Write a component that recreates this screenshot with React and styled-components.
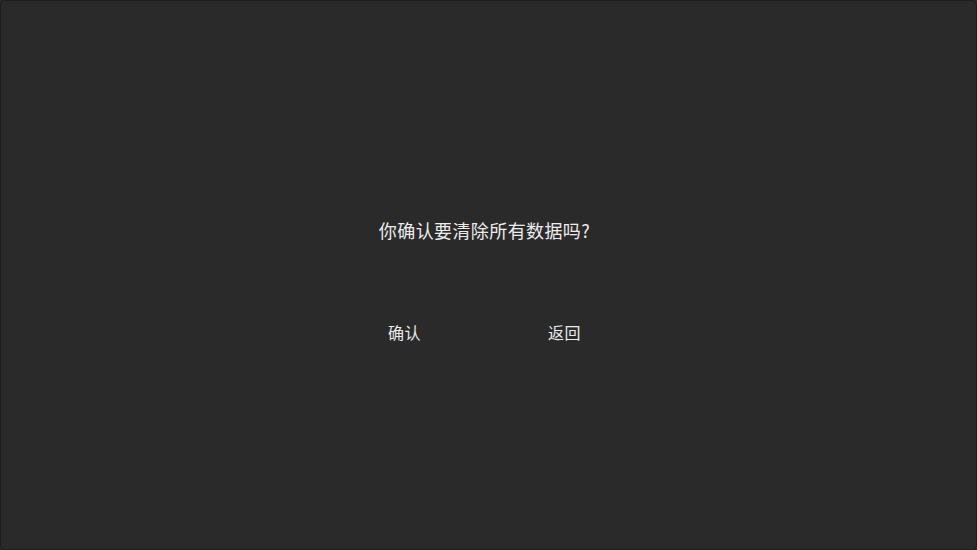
import React from 'react';
import styled, { createGlobalStyle } from 'styled-components';

const GlobalStyle = createGlobalStyle`
  html, body {
    margin: 0;
    padding: 0;
    background-color: #2a2a2a;
  }
  body {
    font-family: "Noto Sans CJK SC", "Noto Sans", sans-serif;
  }
`;

const Screen = styled.div`
  align-items: center;
  background-color: #2a2a2a;
  border: 1px solid #1d1d1d;
  border-radius: 5px;
  box-sizing: border-box;
  display: flex;
  flex-direction: column;
  height: 550px;
  justify-content: center;
  padding: 11px 8px 0 0;
  width: 977px;
`;

const Message = styled.p`
  color: #ececec;
  font-size: 18px;
  letter-spacing: 0.4px;
  line-height: 24px;
  margin: 0;
`;

const ButtonRow = styled.div`
  display: flex;
  gap: 60px;
  margin-top: 79px;
`;

const TextButton = styled.button`
  background: none;
  border: none;
  color: #ececec;
  cursor: pointer;
  font-family: inherit;
  font-size: 16px;
  letter-spacing: 0.5px;
  line-height: 22px;
  padding: 0;
  width: 100px;
`;

export default function App() {
  return (
    <>
      <GlobalStyle />
      <Screen>
        <Message>你确认要清除所有数据吗?</Message>
        <ButtonRow>
          <TextButton>确认</TextButton>
          <TextButton>返回</TextButton>
        </ButtonRow>
      </Screen>
    </>
  );
}
